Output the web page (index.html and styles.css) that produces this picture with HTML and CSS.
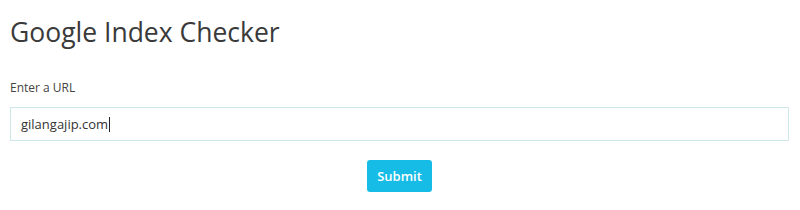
FILE: index.html
```html
<!DOCTYPE html>
<html lang="en">
<head>
  <meta charset="UTF-8">
  <meta name="viewport" content="width=device-width, initial-scale=1.0">
  <title>Google Index Checker</title>
  <link rel="stylesheet" href="styles.css">
</head>
<body>
  <div class="container">
    <h1 class="title">Google Index Checker</h1>
    <form class="checker">
      <label class="label" for="url">Enter a URL</label>
      <div class="field" id="url">gilangajip.com<span class="caret"></span></div>
      <div class="actions">
        <button type="button" class="btn">Submit</button>
      </div>
    </form>
  </div>
</body>
</html>
```

FILE: styles.css
```css
body{
  margin: 0;
  background: #fff;
  font-family: "Open Sans", "Noto Sans", sans-serif;
  color: #333;
}
.container{
  padding: 0 11px 0 10px;
}
.title{
  margin: 0;
  padding-top: 14px;
  font-size: 26.5px;
  font-weight: 400;
  line-height: 36px;
  color: #3a3a3a;
}
.checker{
  margin-top: 30px;
}
.label{
  display: block;
  font-size: 12px;
  line-height: 16px;
  color: #444;
}
.field{
  margin-top: 11px;
  height: 34px;
  box-sizing: border-box;
  border: 1px solid #cfe9ea;
  padding: 0 10px;
  display: flex;
  align-items: center;
  font-size: 13px;
  color: #333;
}
.caret{
  display: inline-block;
  width: 1px;
  height: 15px;
  background: #222;
  margin-left: 1px;
}
.actions{
  display: flex;
  justify-content: center;
  margin-top: 19px;
}
.btn{
  background: #17bce6;
  color: #fff;
  border: 0;
  border-radius: 3px;
  width: 65px;
  height: 32px;
  font-family: inherit;
  font-size: 13px;
  font-weight: 600;
}
```
